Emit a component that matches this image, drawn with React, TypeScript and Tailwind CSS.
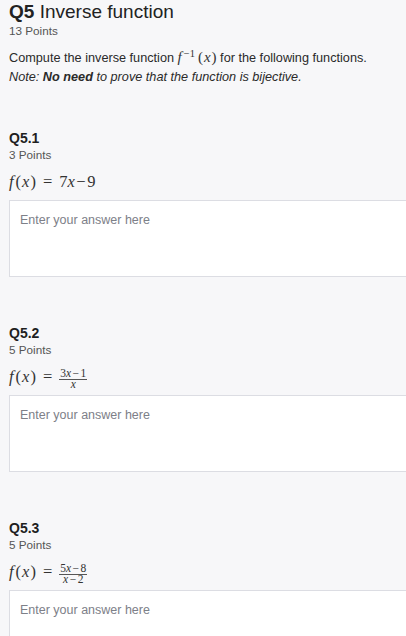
// Gradescope-style question page: one parent question with three sub-parts,
// each holding a formula and an empty answer box.
import type { ReactNode } from 'react'

const SANS = "font-['Liberation_Sans',Arial,sans-serif]"
const SERIF = "font-['Liberation_Serif','Times_New_Roman',serif]"

function Frac({ num, den }: { num: ReactNode; den: ReactNode }) {
  return (
    <span className="inline-flex flex-col items-center align-middle text-[11.5px]">
      <span className="px-[1px] leading-[11px]">{num}</span>
      <span className="h-px w-full bg-[#555]" />
      <span className="px-[1px] leading-[8px]">{den}</span>
    </span>
  )
}

function Minus() {
  return <span className="mx-[1.5px]">−</span>
}

function Fx() {
  return (
    <>
      <i className="mr-[1px]">f</i>
      <span className="ml-[1px]">(</span>
      <i className="mx-[1px]">x</i>
      <span>)</span>
      <span className="mx-[7px]">=</span>
    </>
  )
}

interface SubQuestionProps {
  id: string
  points: number
  formula: ReactNode
  first?: boolean
}

function SubQuestion({ id, points, formula, first }: SubQuestionProps) {
  return (
    <section className={first ? 'mt-[42px]' : 'mt-[47px]'}>
      <h3 className="text-[14px] font-bold leading-[18px] text-[#1f1f1f]">{id}</h3>
      <div className="text-[11.7px] leading-[16px] text-[#555]">{points} Points</div>
      <div className={`h-[37px] pt-[9px] text-[16.5px] leading-[20px] text-[#333] ${SERIF}`}>
        {formula}
      </div>
      <textarea
        placeholder="Enter your answer here"
        className="block h-[77px] w-[420px] resize-none border border-[#dcdde3] bg-white px-[10px] pt-[10px] text-[12.5px] leading-[18px] text-[#333] outline-none placeholder:text-[#7d8088]"
      />
    </section>
  )
}

export default function App() {
  return (
    <div className={`min-h-screen overflow-hidden bg-[#f7f7f9] pl-[9px] pt-[1px] text-[#2a2a2a] ${SANS}`}>
      <h2 className="text-[19px] leading-[22px] text-[#222]">
        <span className="font-bold">Q5</span> Inverse function
      </h2>
      <div className="text-[11.7px] leading-[16px] text-[#555]">13 Points</div>

      <p className="mt-[10px] text-[12.7px] leading-[19px]">
        Compute the inverse function{' '}
        <span className={`text-[15px] leading-none text-[#333] ${SERIF}`}>
          <i>f</i>
          <sup className="ml-[2px] text-[10.5px]">−1</sup>
          <span className="ml-[3px]">(</span>
          <i className="mx-[1px]">x</i>)
        </span>{' '}
        for the following functions.
      </p>
      <p className="text-[12.7px] italic leading-[19px]">
        Note: <b>No need</b> to prove that the function is bijective.
      </p>

      <SubQuestion
        first
        id="Q5.1"
        points={3}
        formula={
          <>
            <Fx />
            7<i>x</i>
            <Minus />9
          </>
        }
      />
      <SubQuestion
        id="Q5.2"
        points={5}
        formula={
          <>
            <Fx />
            <Frac
              num={
                <>
                  3<i>x</i>
                  <Minus />1
                </>
              }
              den={<i>x</i>}
            />
          </>
        }
      />
      <SubQuestion
        id="Q5.3"
        points={5}
        formula={
          <>
            <Fx />
            <Frac
              num={
                <>
                  5<i>x</i>
                  <Minus />8
                </>
              }
              den={
                <>
                  <i>x</i>
                  <Minus />2
                </>
              }
            />
          </>
        }
      />
    </div>
  )
}
